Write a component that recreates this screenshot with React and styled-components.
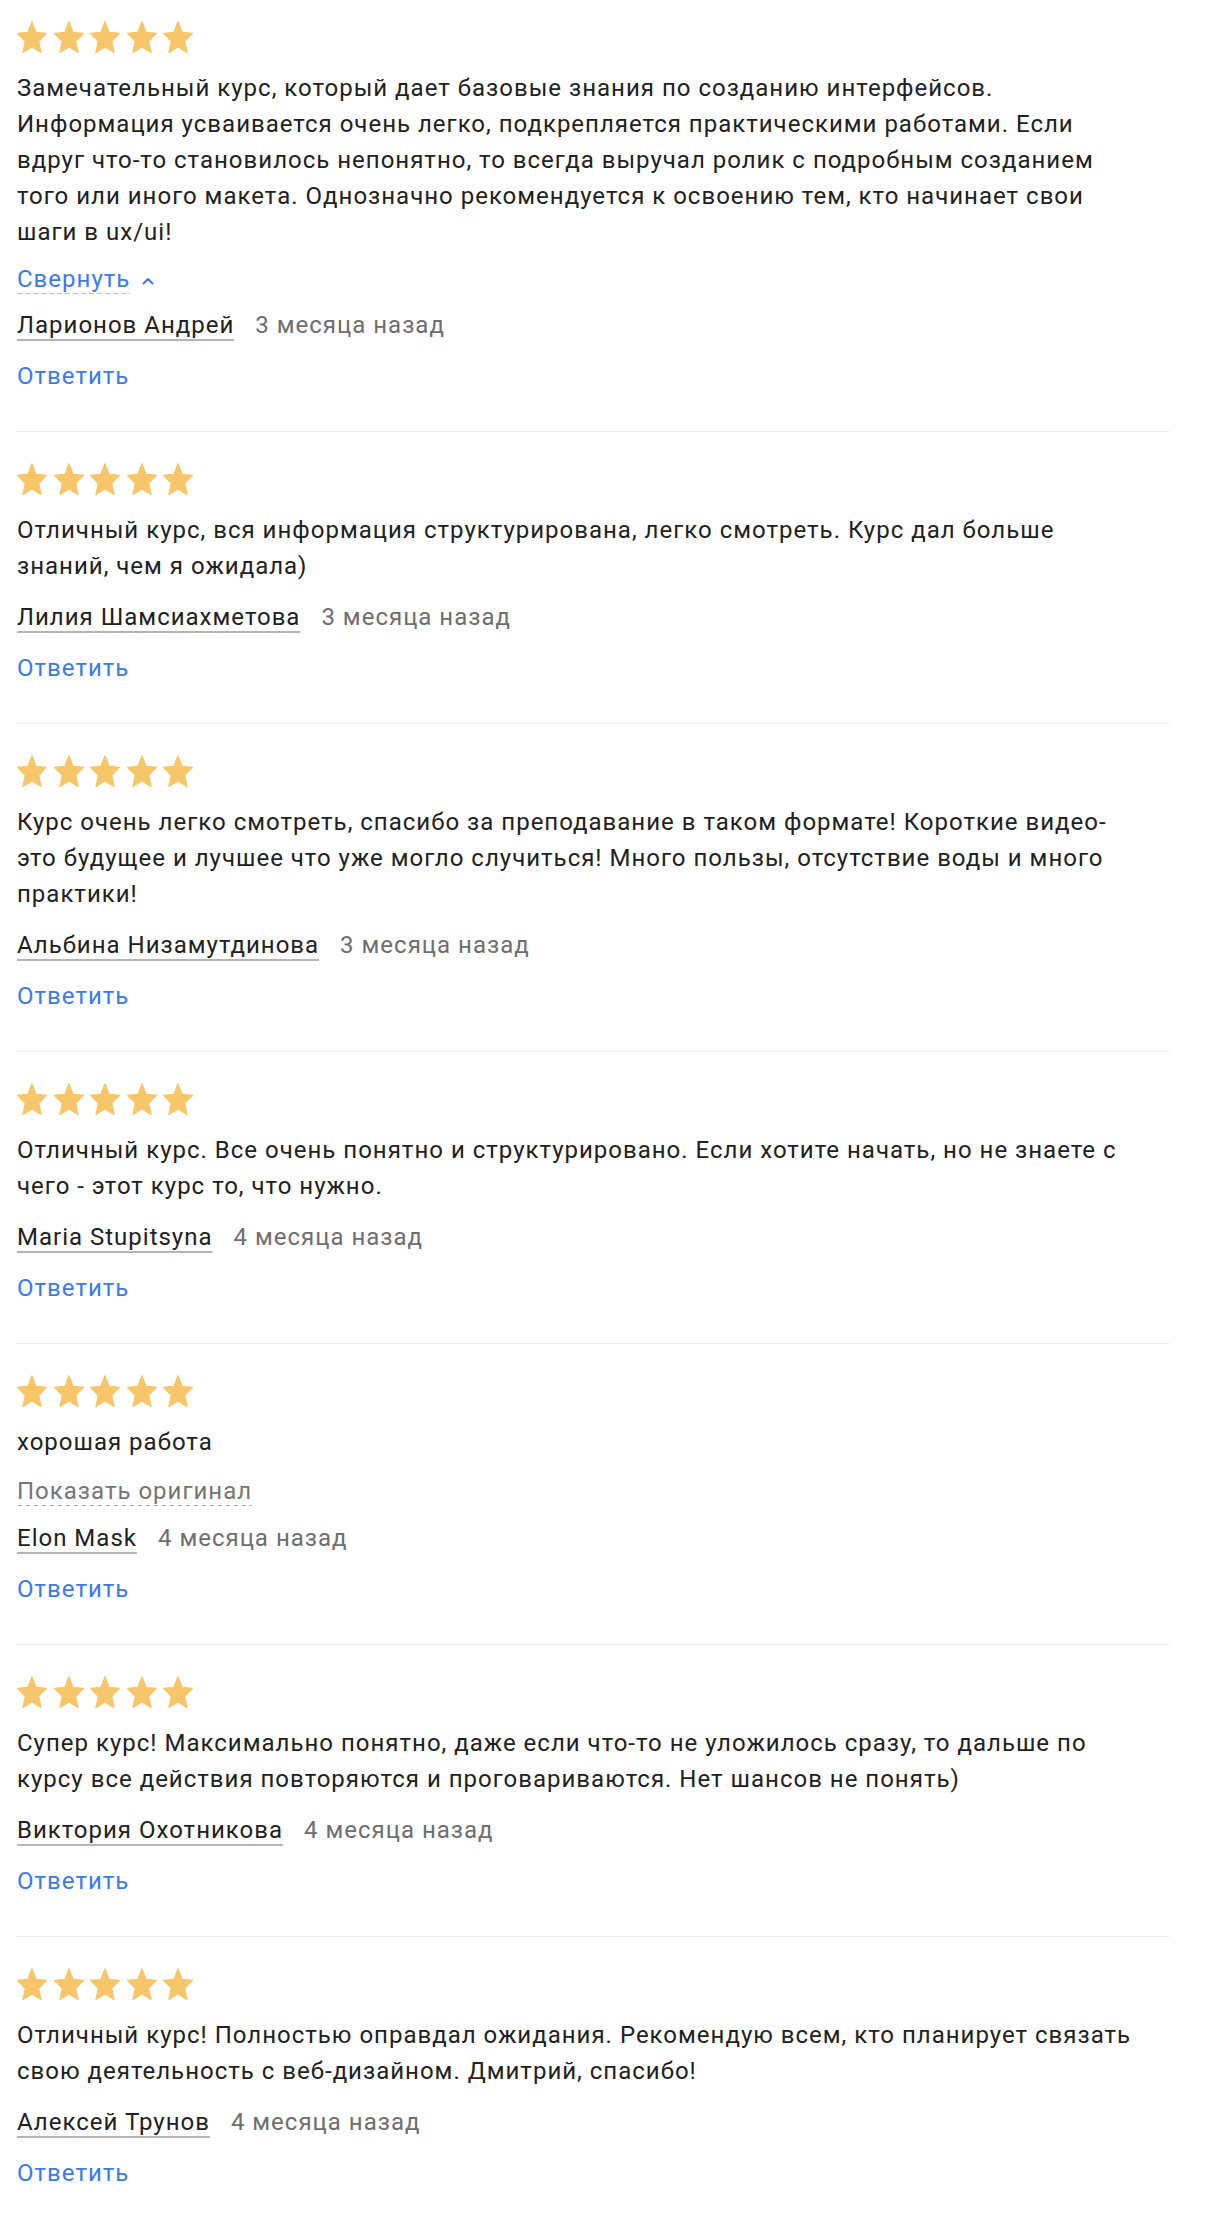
import React from 'react';
import styled, { createGlobalStyle } from 'styled-components';

const GlobalStyle = createGlobalStyle`
  html, body {
    margin: 0;
    padding: 0;
    background: #ffffff;
  }
  body {
    font-family: Roboto, "Liberation Sans", Arial, sans-serif;
    -webkit-font-smoothing: antialiased;
  }
`;

const ReviewList = styled.div`
  width: 1152px;
  padding: 21px 0 0 17px;
`;

const Review = styled.article`
  padding: 31px 0 37px;
  border-bottom: 1px solid #e6e6f6;

  &:first-child {
    padding-top: 0;
  }

  &:last-child {
    border-bottom: none;
  }
`;

const Stars = styled.div`
  display: flex;
  gap: 6.5px;
  height: 32px;
`;

const Text = styled.p`
  margin: 17px 0 0;
  max-width: ${(p) => (p.$narrow ? '1087px' : '1126px')};
  font-size: 24px;
  line-height: 36px;
  letter-spacing: 1px;
  color: #212121;
`;

const ToggleRow = styled.div`
  margin-top: ${(p) => (p.$muted ? '20px' : '18px')};
  display: flex;
  align-items: center;
  gap: 12px;
  height: 26px;
`;

const Toggle = styled.span`
  display: inline-block;
  font-size: 24px;
  line-height: 22px;
  letter-spacing: 1px;
  padding-bottom: 4px;
  color: ${(p) => (p.$muted ? '#757575' : '#3b7be8')};
  background-image: linear-gradient(
    to right,
    ${(p) => (p.$muted ? '#b8b8b8' : '#a4bff2')} 5px,
    transparent 5px
  );
  background-size: 8px 1px;
  background-repeat: repeat-x;
  background-position: left bottom;
  cursor: pointer;
`;

const Meta = styled.div`
  margin-top: ${(p) => p.$top}px;
  display: flex;
  align-items: baseline;
  gap: 21px;
  font-size: 24px;
  line-height: 36px;
  letter-spacing: 1px;
`;

const Author = styled.span`
  color: #212121;
  text-decoration: underline;
  text-decoration-color: #b5b5b5;
  text-decoration-thickness: 2px;
  text-underline-offset: 6px;
`;

const Date = styled.span`
  color: #6e6e6e;
`;

const Reply = styled.div`
  margin-top: 15px;
  font-size: 24px;
  line-height: 36px;
  letter-spacing: 1px;
  color: #3b7be8;
  cursor: pointer;
`;

const Star = () => (
  <svg width="30" height="32.3" viewBox="0 0 26 28">
    <polygon
      fill="#f7c66a"
      stroke="#f7c66a"
      strokeWidth="1"
      strokeLinejoin="round"
      points="13,0.6 16.62,9.85 25.6,10.7 18.85,17.63 20.9,27.4 13,22.45 5.1,27.4 7.15,17.63 0.4,10.7 9.38,9.85"
    />
  </svg>
);

const Chevron = () => (
  <svg width="12" height="8" viewBox="0 0 12 8">
    <path d="M1.5 6.5L6 2l4.5 4.5" fill="none" stroke="#3b7be8" strokeWidth="2" strokeLinecap="round" strokeLinejoin="round" />
  </svg>
);

const reviews = [
  {
    text: 'Замечательный курс, который дает базовые знания по созданию интерфейсов. Информация усваивается очень легко, подкрепляется практическими работами. Если вдруг что-то становилось непонятно, то всегда выручал ролик с подробным созданием того или иного макета. Однозначно рекомендуется к освоению тем, кто начинает свои шаги в ux/ui!',
    author: 'Ларионов Андрей',
    date: '3 месяца назад',
    collapse: true,
  },
  {
    text: 'Отличный курс, вся информация структурирована, легко смотреть. Курс дал больше знаний, чем я ожидала)',
    author: 'Лилия Шамсиахметова',
    date: '3 месяца назад',
  },
  {
    text: 'Курс очень легко смотреть, спасибо за преподавание в таком формате! Короткие видео-это будущее и лучшее что уже могло случиться! Много пользы, отсутствие воды и много практики!',
    author: 'Альбина Низамутдинова',
    date: '3 месяца назад',
  },
  {
    text: 'Отличный курс. Все очень понятно и структурировано. Если хотите начать, но не знаете с чего - этот курс то, что нужно.',
    author: 'Maria Stupitsyna',
    date: '4 месяца назад',
  },
  {
    text: 'хорошая работа',
    author: 'Elon Mask',
    date: '4 месяца назад',
    original: true,
  },
  {
    text: 'Супер курс! Максимально понятно, даже если что-то не уложилось сразу, то дальше по курсу все действия повторяются и проговариваются. Нет шансов не понять)',
    author: 'Виктория Охотникова',
    date: '4 месяца назад',
  },
  {
    text: 'Отличный курс! Полностью оправдал ожидания. Рекомендую всем, кто планирует связать свою деятельность с веб-дизайном. Дмитрий, спасибо!',
    author: 'Алексей Трунов',
    date: '4 месяца назад',
  },
];

const ReviewItem = ({ review }) => (
  <Review>
    <Stars>
      {[0, 1, 2, 3, 4].map((i) => (
        <Star key={i} />
      ))}
    </Stars>
    <Text $narrow={review.collapse}>{review.text}</Text>
    {review.collapse && (
      <ToggleRow>
        <Toggle>Свернуть</Toggle>
        <Chevron />
      </ToggleRow>
    )}
    {review.original && (
      <ToggleRow $muted>
        <Toggle $muted>Показать оригинал</Toggle>
      </ToggleRow>
    )}
    <Meta $top={review.original ? 14 : review.collapse ? 13 : 15}>
      <Author>{review.author}</Author>
      <Date>{review.date}</Date>
    </Meta>
    <Reply>Ответить</Reply>
  </Review>
);

const App = () => (
  <>
    <GlobalStyle />
    <ReviewList>
      {reviews.map((r) => (
        <ReviewItem key={r.author} review={r} />
      ))}
    </ReviewList>
  </>
);

export default App;
